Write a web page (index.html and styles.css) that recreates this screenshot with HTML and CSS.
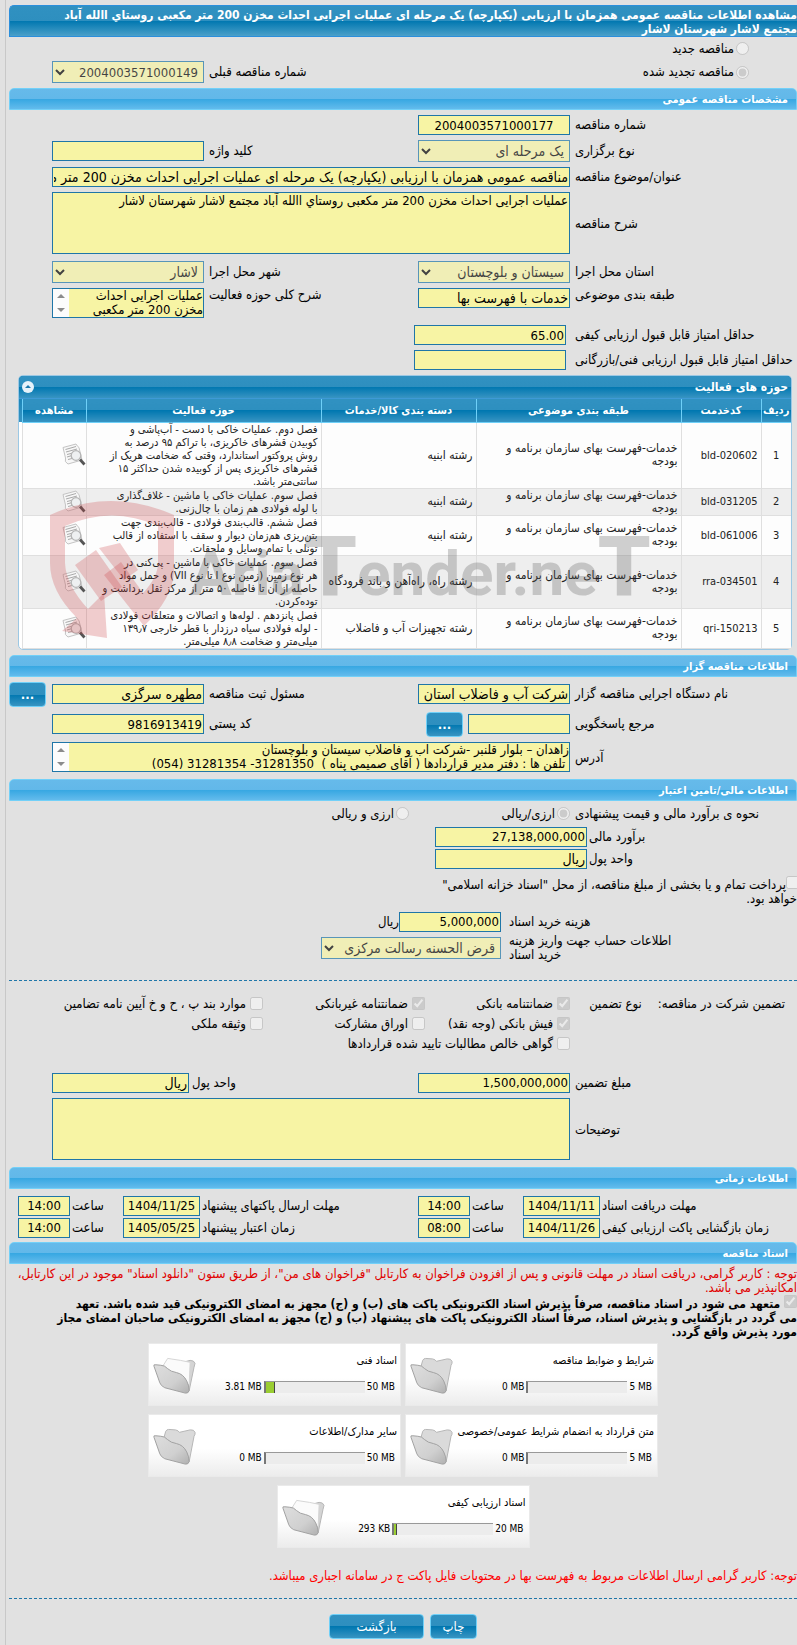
FILE: index.html
```html
<!DOCTYPE html>
<html lang="fa" dir="rtl">
  <head>
    <meta charset="UTF-8" />
    <meta name="viewport" content="width=device-width, initial-scale=1.0" />
    <title>مشاهده اطلاعات مناقصه عمومی</title>
    <link rel="stylesheet" href="styles.css">
  </head>
  <body>
    <svg class="defs" width="0" height="0" aria-hidden="true">
      <defs>
        <linearGradient id="folderFront" x1="0" y1="0" x2="1" y2="1">
          <stop offset="0" stop-color="#dedede" />
          <stop offset="0.6" stop-color="#d0d0d0" />
          <stop offset="1" stop-color="#b0b0b0" />
        </linearGradient>
      </defs>
      <symbol id="folder" viewBox="0 0 44 38">
        <path d="M11 10 L13 3 Q14 1 16 1 L23 1.500 Q26 2 27 4 L38 1.500 Q42 1 43 4 Q43.500 6 42 8 L37 34 L30 34 L12 22 Z" fill="#dadada" stroke="#b5b5b5" />
        <path d="M1 9 Q0 7 3 7.500 L8 8 Q12 8 15 11.500 Q18 14.500 24 15.500 Q31 17 34.500 24 Q37 29 37 34 Q36 37 33 36.500 L12 31 Q8 29 7 26 Z" fill="url(#folderFront)" stroke="#a0a0a0" />
      </symbol>
      <symbol id="folder-full" viewBox="0 0 44 38">
        <path d="M12 10 L38 3 Q42 3 43 6 L42 10 L37 34 L30 34 L12 22 Z" fill="#d4d4d4" stroke="#b5b5b5" />
        <path d="M10 9 L15 1 L28 3 L38 5 L37 28 L12 22 Z" fill="#fbfbfb" stroke="#d5d5d5" />
        <path d="M1 9 Q0 7 3 7.500 L8 8 Q12 8 15 11.500 Q18 14.500 24 15.500 Q31 17 34.500 24 Q37 29 37 34 Q36 37 33 36.500 L12 31 Q8 29 7 26 Z" fill="url(#folderFront)" stroke="#a0a0a0" />
      </symbol>
      <symbol id="view" viewBox="0 0 24 24">
        <path d="M1 4.500 L14 1 Q15 3 17 4.500 L20 17 L6 21 Q2 19 3.500 15 Z" fill="#f7f7f7" stroke="#c4c4c4" />
        <path d="M3.500 6.500 L14 3.500 M4 9 L15 6 M5 11.500 L11 10 M5 14 L10 12.500 M6 16.500 L10 15.500" stroke="#aaa" fill="none" />
        <circle cx="14" cy="12.500" r="4.800" fill="#eef0f1" stroke="#b5b5b5" stroke-width="1.300" />
        <path d="M18 16.500 L22.500 21.500" stroke="#555" stroke-width="2.800" />
      </symbol>
    </svg>

    <main class="page">
      <h1 class="page-title">مشاهده اطلاعات مناقصه عمومی همزمان با ارزیابی (یکپارچه) یک مرحله ای عملیات اجرایی احداث مخزن 200 متر مکعبی روستاي االله آباد<br>مجتمع لاشار شهرستان لاشار</h1>

      <div class="form kind">
        <label class="choice full"><input type="radio" name="kind" disabled />مناقصه جدید</label>
        <label class="choice half"><input type="radio" name="kind" checked disabled />مناقصه تجدید شده</label>
        <label class="label side" for="prevNo">شماره مناقصه قبلی</label>
        <select id="prevNo" class="field number" disabled><option>2004003571000149</option></select>
      </div>

      <h2 class="section">مشخصات مناقصه عمومی</h2>
      <div class="form">
        <label class="label" for="tenderNo">شماره مناقصه</label>
        <div class="cell rest"><input id="tenderNo" class="field number center" value="2004003571000177" readonly /></div>

        <label class="label" for="stage">نوع برگزاری</label>
        <select id="stage" class="field" disabled><option>یک مرحله ای</option></select>
        <label class="label side" for="keyword">کلید واژه</label>
        <input id="keyword" class="field" readonly />

        <label class="label" for="subject">عنوان/موضوع مناقصه</label>
        <input id="subject" class="field wide" value="مناقصه عمومی همزمان با ارزیابی (یکپارچه) یک مرحله ای عملیات اجرایی احداث مخزن 200 متر مکعبی روستاي االله آباد" readonly />

        <label class="label" for="desc">شرح مناقصه</label>
        <textarea id="desc" class="field wide tall" readonly>عملیات اجرایی احداث مخزن 200 متر مکعبی روستاي االله آباد مجتمع لاشار شهرستان لاشار</textarea>

        <label class="label" for="province">استان محل اجرا</label>
        <select id="province" class="field" disabled><option>سیستان و بلوچستان</option></select>
        <label class="label side" for="city">شهر محل اجرا</label>
        <select id="city" class="field" disabled><option>لاشار</option></select>

        <label class="label top" for="category">طبقه بندی موضوعی</label>
        <input id="category" class="field top" value="خدمات با فهرست بها" readonly />
        <label class="label side top" for="scope">شرح کلی حوزه فعالیت</label>
        <div class="scroll-box">
          <textarea id="scope" readonly>عملیات اجرایی احداث
مخزن 200 متر مکعبی</textarea>
          <svg viewBox="0 0 16 28"><path d="M8 5 L12 9 H4 Z M8 23 L4 19 H12 Z" /></svg>
        </div>

        <label class="label" for="scoreQ">حداقل امتیاز قابل قبول ارزیابی کیفی</label>
        <div class="cell rest inset"><input id="scoreQ" class="field number" value="65.00" readonly /></div>
        <label class="label" for="scoreT">حداقل امتیاز قابل قبول ارزیابی فنی/بازرگانی</label>
        <div class="cell rest inset"><input id="scoreT" class="field number" readonly /></div>
      </div>

      <section class="panel">
        <div class="panel-title">
          <span>حوزه های فعالیت</span>
          <button type="button" class="collapse" aria-label="بستن"><svg viewBox="0 0 12 12"><circle cx="6" cy="6" r="6" /><path d="M6 4 L9 7 H3 Z" /></svg></button>
        </div>
        <table class="grid">
          <thead>
            <tr>
              <th class="c-row">ردیف</th>
              <th class="c-code">کدخدمت</th>
              <th class="c-class">طبقه بندی موضوعی</th>
              <th class="c-group">دسته بندی کالا/خدمات</th>
              <th class="c-field">حوزه فعالیت</th>
              <th class="c-view">مشاهده</th>
            </tr>
          </thead>
          <tbody>
            <tr>
              <td class="num">1</td>
              <td class="code">bld-020602</td>
              <td>خدمات-فهرست بهای سازمان برنامه و<br>بودجه</td>
              <td>رشته ابنیه</td>
              <td class="activity">فصل دوم. عملیات خاکی با دست - آب‌پاشی و<br>کوبیدن قشرهای خاکریزی، با تراکم ۹۵ درصد به<br>روش پروکتور استاندارد، وقتی که ضخامت هریک از<br>قشرهای خاکریزی پس از کوبیده شدن حداکثر ۱۵<br>سانتی‌متر باشد.</td>
              <td class="view"><svg><use href="#view" /></svg></td>
            </tr>
            <tr>
              <td class="num">2</td>
              <td class="code">bld-031205</td>
              <td>خدمات-فهرست بهای سازمان برنامه و<br>بودجه</td>
              <td>رشته ابنیه</td>
              <td class="activity">فصل سوم. عملیات خاکی با ماشین - غلاف‌گذاری<br>با لوله فولادی هم زمان با چال‌زنی.</td>
              <td class="view"><svg><use href="#view" /></svg></td>
            </tr>
            <tr>
              <td class="num">3</td>
              <td class="code">bld-061006</td>
              <td>خدمات-فهرست بهای سازمان برنامه و<br>بودجه</td>
              <td>رشته ابنیه</td>
              <td class="activity">فصل ششم. قالب‌بندی فولادی - قالب‌بندی جهت<br>بتن‌ریزی هم‌زمان دیوار و سقف با استفاده از قالب<br>تونلی با تمام وسایل و ملحقات.</td>
              <td class="view"><svg><use href="#view" /></svg></td>
            </tr>
            <tr>
              <td class="num">4</td>
              <td class="code">rra-034501</td>
              <td>خدمات-فهرست بهای سازمان برنامه و<br>بودجه</td>
              <td>رشته راه، راه‌آهن و باند فرودگاه</td>
              <td class="activity">فصل سوم. عملیات خاکی با ماشین - پی‌کنی در<br>هر نوع زمین (زمین نوع I تا نوع VII) و حمل مواد<br>حاصله از آن تا فاصله ۵۰ متر از مرکز ثقل برداشت و<br>توده‌کردن.</td>
              <td class="view"><svg><use href="#view" /></svg></td>
            </tr>
            <tr>
              <td class="num">5</td>
              <td class="code">qri-150213</td>
              <td>خدمات-فهرست بهای سازمان برنامه و<br>بودجه</td>
              <td>رشته تجهیزات آب و فاضلاب</td>
              <td class="activity">فصل پانزدهم . لوله‌ها و اتصالات و متعلقات فولادی<br>- لوله فولادی سیاه درزدار با قطر خارجی ۱۳۹٫۷<br>میلی‌متر و ضخامت ۸٫۸ میلی‌متر.</td>
              <td class="view"><svg><use href="#view" /></svg></td>
            </tr>
          </tbody>
        </table>
        <div class="watermark" dir="ltr">
          <svg viewBox="0 0 124 138">
            <path d="M0 14 Q60 -14 124 14 V72 Q122 98 94 125 L54 74 L71 61 L93 92 Q108 76 108 62 V25 Q62 4 15 25 V62 Q16 84 38 108 L54 92 L57 137 L12 130 L27 117 Q0 90 0 62 Z" />
            <path d="M25 64 L46 49 L72 86 L51 100 Z M49 47 L70 42 L88 69 L74 79 Z" />
          </svg>
          <span>Aria<b>T</b>ender.ne<b>T</b></span>
        </div>
      </section>

      <h2 class="section">اطلاعات مناقصه گزار</h2>
      <div class="form">
        <label class="label" for="org">نام دستگاه اجرایی مناقصه گزار</label>
        <input id="org" class="field" value="شرکت آب و فاضلاب استان" readonly />
        <label class="label side" for="owner">مسئول ثبت مناقصه</label>
        <input id="owner" class="field" value="مطهره سرگزی" readonly />
        <button type="button" class="btn more">...</button>

        <label class="label" for="contact">مرجع پاسخگویی</label>
        <div class="cell contact">
          <input id="contact" class="field" readonly />
          <button type="button" class="btn more">...</button>
        </div>
        <label class="label side" for="postal">کد پستی</label>
        <input id="postal" class="field number" value="9816913419" readonly />

        <label class="label" for="address">آدرس</label>
        <div class="scroll-box wide">
          <textarea id="address" readonly>زاهدان – بلوار قلنبر -شرکت آب و فاضلاب سیستان و بلوچستان
 تلفن ها : دفتر مدیر قراردادها ( آقای صمیمی پناه )  31281350- 31281354 (054)</textarea>
          <svg viewBox="0 0 16 28"><path d="M8 5 L12 9 H4 Z M8 23 L4 19 H12 Z" /></svg>
        </div>
      </div>

      <h2 class="section">اطلاعات مالی/تامین اعتبار</h2>
      <div class="currency-kind">
        <span class="label">نحوه ی برآورد مالی و قیمت پیشنهادی</span>
        <label class="choice"><input type="radio" name="currency" checked disabled />ارزی/ریالی</label>
        <label class="choice"><input type="radio" name="currency" disabled />ارزی و ریالی</label>
      </div>
      <div class="estimate">
        <label class="label" for="estimate">برآورد مالی</label>
        <input id="estimate" class="field number" value="27,138,000,000" readonly />
        <label class="label" for="unit">واحد پول</label>
        <input id="unit" class="field" value="ریال" readonly />
      </div>
      <label class="treasury"><input type="checkbox" disabled />پرداخت تمام و یا بخشی از مبلغ مناقصه، از محل "اسناد خزانه اسلامی" خواهد بود.</label>
      <div class="cost">
        <label class="label" for="cost">هزینه خرید اسناد</label>
        <div class="cell"><input id="cost" class="field number" value="5,000,000" readonly />ریال</div>
        <label class="label" for="account">اطلاعات حساب جهت واریز هزینه<br>خرید اسناد</label>
        <select id="account" class="field" disabled><option>قرض الحسنه رسالت مرکزی</option></select>
      </div>
      <hr>

      <div class="guarantee">
        <div class="guarantee-title"><span>تضمین شرکت در مناقصه:</span><span>نوع تضمین</span></div>
        <label class="choice"><input type="checkbox" checked disabled />ضمانتنامه بانکی</label>
        <label class="choice"><input type="checkbox" checked disabled />ضمانتنامه غیربانکی</label>
        <label class="choice"><input type="checkbox" disabled />موارد بند پ ، ح و خ آیین نامه تضامین</label>
        <label class="choice second"><input type="checkbox" checked disabled />فیش بانکی (وجه نقد)</label>
        <label class="choice"><input type="checkbox" disabled />اوراق مشارکت</label>
        <label class="choice"><input type="checkbox" disabled />وثیقه ملکی</label>
        <label class="choice second long"><input type="checkbox" disabled />گواهی خالص مطالبات تایید شده قراردادها</label>
      </div>
      <div class="form amounts">
        <label class="label" for="amount">مبلغ تضمین</label>
        <input id="amount" class="field number" value="1,500,000,000" readonly />
        <div class="unit-pair">
          <label for="unit2">واحد پول</label>
          <input id="unit2" class="field" value="ریال" readonly />
        </div>
        <label class="label" for="notes">توضیحات</label>
        <textarea id="notes" class="field wide tall" readonly></textarea>
      </div>

      <h2 class="section">اطلاعات زمانی</h2>
      <div class="times">
        <label class="label" for="d1">مهلت دریافت اسناد</label>
        <input id="d1" class="field number center" value="1404/11/11" readonly />
        <label class="label" for="t1">ساعت</label>
        <input id="t1" class="field number center" value="14:00" readonly />
        <label class="label" for="d2">مهلت ارسال پاکتهای پیشنهاد</label>
        <input id="d2" class="field number center" value="1404/11/25" readonly />
        <label class="label" for="t2">ساعت</label>
        <input id="t2" class="field number center" value="14:00" readonly />
        <label class="label" for="d3">زمان بازگشایی پاکت ارزیابی کیفی</label>
        <input id="d3" class="field number center" value="1404/11/26" readonly />
        <label class="label" for="t3">ساعت</label>
        <input id="t3" class="field number center" value="08:00" readonly />
        <label class="label" for="d4">زمان اعتبار پیشنهاد</label>
        <input id="d4" class="field number center" value="1405/05/25" readonly />
        <label class="label" for="t4">ساعت</label>
        <input id="t4" class="field number center" value="14:00" readonly />
      </div>

      <h2 class="section">اسناد مناقصه</h2>
      <p class="notice">توجه : کاربر گرامی، دریافت اسناد در مهلت قانونی و پس از افزودن فراخوان به کارتابل "فراخوان های من"، از طریق ستون "دانلود اسناد" موجود در این کارتابل،<br>امکانپذیر می باشد.</p>
      <label class="commit"><input type="checkbox" checked disabled /> متعهد می شود در اسناد مناقصه، صرفاً پذیرش اسناد الکترونیکی پاکت های (ب) و (ج) مجهز به امضای الکترونیکی قید شده باشد. تعهد<br>می گردد در بازگشایی و پذیرش اسناد، صرفاً اسناد الکترونیکی پاکت های پیشنهاد (ب) و (ج) مجهز به امضای الکترونیکی صاحبان امضای مجاز<br>مورد پذیرش واقع گردد.</label>

      <div class="docs">
        <div class="doc">
          <div class="doc-info">
            <div class="doc-name">شرایط و ضوابط مناقصه</div>
            <div class="quota"><span dir="ltr">5 MB</span><div class="bar"></div><span dir="ltr">0 MB</span></div>
          </div>
          <svg><use href="#folder" /></svg>
        </div>
        <div class="doc">
          <div class="doc-info">
            <div class="doc-name">اسناد فنی</div>
            <div class="quota"><span dir="ltr">50 MB</span><div class="bar"><i style="width: 9%"></i></div><span dir="ltr">3.81 MB</span></div>
          </div>
          <svg><use href="#folder-full" /></svg>
        </div>
        <div class="doc">
          <div class="doc-info">
            <div class="doc-name">متن قرارداد به انضمام شرایط عمومی/خصوصی</div>
            <div class="quota"><span dir="ltr">5 MB</span><div class="bar"></div><span dir="ltr">0 MB</span></div>
          </div>
          <svg><use href="#folder" /></svg>
        </div>
        <div class="doc">
          <div class="doc-info">
            <div class="doc-name">سایر مدارک/اطلاعات</div>
            <div class="quota"><span dir="ltr">50 MB</span><div class="bar"></div><span dir="ltr">0 MB</span></div>
          </div>
          <svg><use href="#folder" /></svg>
        </div>
        <div class="doc">
          <div class="doc-info">
            <div class="doc-name">اسناد ارزیابی کیفی</div>
            <div class="quota"><span dir="ltr">20 MB</span><div class="bar"><i style="width: 3%"></i></div><span dir="ltr">293 KB</span></div>
          </div>
          <svg><use href="#folder-full" /></svg>
        </div>
      </div>
      <p class="warning">توجه: کاربر گرامی ارسال اطلاعات مربوط به فهرست بها در محتویات فایل پاکت ج در سامانه اجباری میباشد.</p>
      <hr>
      <div class="actions">
        <button type="button" class="btn print">چاپ</button>
        <button type="button" class="btn back">بازگشت</button>
      </div>
    </main>
  </body>
</html>
```
FILE: styles.css
```css
* {
  box-sizing: border-box;
}

body {
  margin: 0;
  background: #e1e1e1;
  color: #000;
  font-family: Tahoma, "DejaVu Sans Condensed", "DejaVu Sans", sans-serif;
  font-size: 13px;
  line-height: 14px;
  overflow-x: hidden;
}

.defs {
  position: absolute;
}

.page {
  margin-left: 5px;
  padding: 5px 0 6px 3px;
  border-left: 1px solid #c8c8c8;
}

/* Title bars */
.page-title {
  margin: 0;
  padding: 2px 0;
  height: 32px;
  font-size: 12px;
  line-height: 14px;
  color: #fff;
  border: 1px solid #2b8fdc;
  border-right: 0;
  border-radius: 5px 0 0 0;
  background: linear-gradient(#3091c1 0, #2e8fbf 50%, #0077b0 50%, #4ba0c9 100%);
}

.section {
  margin: 0;
  padding: 0 8px;
  height: 22px;
  font-size: 11px;
  line-height: 21px;
  color: #fff;
  border: 1px solid #72d0f8;
  border-radius: 5px 5px 0 0;
  background: linear-gradient(#66baea 0, #62b8e9 50%, #36a7e2 50%, #63bbec 100%);
}

/* Form rows */
.form {
  display: grid;
  grid-template-columns: 227fr 152px 214fr 152px 43px;
  gap: 5px 0;
  align-items: center;
  padding: 5px 0;
}

.label {
  padding-left: 5px;
  text-align: left;
  white-space: nowrap;
}

.form > .label {
  grid-column: 1;
}

.form > .side {
  grid-column: 3;
}

.field,
.scroll-box {
  width: 152px;
  border: 1px solid #1f76a8;
  background: #f7f4a4;
}

.field {
  height: 20px;
  margin: 0;
  padding: 0 1px;
  border-radius: 0;
  color: #000;
  font-family: inherit;
  font-size: 14px;
  outline: none;
}

.number {
  font-size: 13px;
}

select.field {
  height: 22px;
  padding: 0 1px;
  opacity: 0.7;
}

.center {
  text-align: center;
}

.wide {
  grid-column: 2 / 5;
  width: 100%;
}

.rest {
  grid-column: 2 / 6;
}

.cell {
  display: flex;
  align-items: center;
}

.inset {
  padding-right: 4px;
}

.top {
  align-self: start;
}

textarea {
  display: block;
  resize: none;
}

textarea.tall {
  height: 62px;
  margin-bottom: 2px;
  font-size: 13px;
  line-height: 16px;
}

.scroll-box {
  display: flex;
  height: 30px;
  margin-bottom: 2px;
}

.scroll-box.wide {
  width: 100%;
}

.scroll-box textarea {
  flex: 1;
  min-width: 0;
  height: 28px;
  padding: 0;
  border: 0;
  background: none;
  font-family: inherit;
  font-size: 13px;
  line-height: 14px;
  overflow: hidden;
  outline: none;
}

.scroll-box svg {
  width: 16px;
  height: 28px;
  background: #fcfcfc;
  fill: #8b8b8b;
}

.choice {
  display: flex;
  align-items: center;
  gap: 2px;
  white-space: nowrap;
}

.choice input,
.treasury input,
.commit input {
  width: 13px;
  height: 13px;
  margin: 0;
}

.kind {
  gap: 1px 0;
  padding: 0 0 5px;
}

.kind .choice {
  padding-right: 48px;
}

.full {
  grid-column: 1 / 6;
  height: 23px;
}

.half {
  grid-column: 1 / 3;
}

/* Activities table */
.panel {
  position: relative;
  margin: 0 5px 5px 9px;
  border: 1px solid #9cc8e4;
  border-radius: 5px;
  background: linear-gradient(#0077b0, #3894c2) top / 100% 46px no-repeat #fff;
}

.panel-title {
  display: flex;
  justify-content: space-between;
  align-items: center;
  height: 23px;
  padding: 0 3px;
  color: #fff;
  font-size: 12px;
  font-weight: bold;
  border-bottom: 1px solid #3e9ad6;
  border-radius: 4px 4px 0 0;
  background: linear-gradient(#3091c1 0, #2e8fbf 50%, #0077b0 50%, #3894c2 100%);
}

.collapse {
  width: 12px;
  height: 12px;
  padding: 0;
  border: 0;
  background: none;
}

.collapse svg {
  display: block;
  width: 12px;
  height: 12px;
  fill: #e6f2fa;
}

.collapse path {
  fill: #1a77ab;
}

.grid {
  width: calc(100% - 3px);
  table-layout: fixed;
  border-collapse: collapse;
  font-size: 12px;
  line-height: 13px;
  color: #222;
}

.c-row { width: 30px; }
.c-code { width: 80px; }
.c-class { width: 205px; }
.c-group { width: 155px; }
.c-field { width: 235px; }

.grid th {
  height: 23px;
  padding: 0;
  color: #fff;
  font-size: 11px;
  border-left: 1px solid #6fd0f8;
  border-bottom: 1px solid #6fd0f8;
  background: linear-gradient(#3091c1 0, #2e8fbf 50%, #0077b0 50%, #3894c2 100%);
}

.grid td {
  padding: 0 3px;
  border-left: 1px solid #dfdfdf;
  border-bottom: 1px solid #dfdfdf;
  background: #fdfdfd;
  white-space: nowrap;
}

.grid tr:nth-child(even) td {
  background: #eee;
}

.grid .num {
  text-align: center;
}

.grid .num,
.grid .code,
.grid .activity {
  font-size: 11px;
}

.grid .view {
  padding: 0 0 0 2px;
  text-align: right;
}

.view svg {
  display: block;
  width: 24px;
  height: 24px;
}

/* Watermark laid over the table */
.watermark {
  position: absolute;
  left: 31px;
  top: 125px;
  display: flex;
  align-items: center;
  gap: 16px;
  pointer-events: none;
}

.watermark svg {
  width: 124px;
  height: 138px;
  fill: rgba(205, 60, 65, 0.25);
}

.watermark span {
  color: rgba(90, 90, 90, 0.28);
  font-family: Roboto, "Liberation Sans", sans-serif;
  font-size: 62px;
  font-weight: bold;
  line-height: 80px;
}

.watermark b {
  font-size: 84px;
}

/* Buttons */
.btn {
  height: 25px;
  padding: 0;
  color: #fff;
  font-family: inherit;
  font-size: 13px;
  border: 1px solid #6fd0f8;
  border-radius: 4px;
  background: linear-gradient(#3091c1 0, #2e8fbf 50%, #0077b0 50%, #3894c2 100%);
}

.more {
  width: 37px;
  font-weight: bold;
  justify-self: end;
}

.contact {
  gap: 5px;
}

.contact .field {
  width: 102px;
}

.contact .btn {
  flex: none;
}

/* Finance */
.currency-kind {
  display: grid;
  grid-template-columns: 227fr 161fr 400fr;
  align-items: center;
  height: 26px;
}

.estimate {
  display: grid;
  grid-template-columns: 210fr 578fr;
  gap: 2px 0;
  align-items: center;
}

.estimate .label {
  padding-left: 2px;
}

.treasury {
  display: block;
  max-width: 375px;
  margin: 7px 0 6px;
}

.treasury input {
  margin-right: -2px;
  vertical-align: 0;
}

.cost {
  display: grid;
  grid-template-columns: 296fr 492fr;
  gap: 2px 0;
  align-items: center;
}

.cost .label {
  justify-self: end;
  padding-left: 8px;
}

#cost {
  width: 102px;
}

#account {
  width: 180px;
}

hr {
  height: 0;
  margin: 18px 0 13px;
  border: 0;
  border-top: 1px dashed #1f76a8;
}

.guarantee {
  display: grid;
  grid-template-columns: 227fr 145fr 162fr 254fr;
  grid-auto-rows: 20px;
  align-items: center;
}

.guarantee .choice {
  gap: 4px;
}

.guarantee-title {
  display: flex;
  gap: 16px;
  padding-right: 12px;
  white-space: nowrap;
}

.second {
  grid-column-start: 2;
}

.long {
  grid-column-end: 4;
}

.amounts {
  padding: 19px 0 5px;
}

.unit-pair {
  grid-column: 3 / 5;
  display: flex;
  align-items: center;
  justify-content: flex-end;
  gap: 3px;
}

.unit-pair .field {
  width: 137px;
}

/* Deadlines */
.times {
  display: grid;
  grid-template-columns: 197fr 77px 53px 52px 218fr 77px 53px 52px;
  gap: 2px 0;
  align-items: center;
  padding: 7px 0 4px 9px;
}

.times .field {
  width: 100%;
}

.times .label {
  padding-left: 2px;
}

/* Documents */
.notice,
.warning {
  margin: 3px 0 0;
  color: #e00000;
}

.commit {
  display: block;
  margin-bottom: 4px;
  font-size: 12px;
  font-weight: bold;
}

.docs {
  display: flex;
  flex-wrap: wrap;
  justify-content: center;
  gap: 8px 4px;
  max-width: 510px;
  margin: 0 auto;
}

.doc {
  display: flex;
  width: 253px;
  height: 63px;
  padding: 10px 3px 0 4px;
  border: 1px solid #eaeaea;
  background: linear-gradient(#fff 55%, #ececec);
  font-size: 11px;
}

.doc > svg {
  width: 43px;
  height: 38px;
  margin-top: 3px;
}

.doc-info {
  flex: 1;
  white-space: nowrap;
}

.quota {
  display: flex;
  align-items: center;
  gap: 2px;
  height: 14px;
  padding-right: 2px;
  margin-top: 12px;
  font-size: 10px;
}

.bar {
  width: 101px;
  height: 12px;
  direction: ltr;
  border-top: 1px solid #999;
  border-left: 2px solid #777;
  background: #ececec;
}

.bar i {
  display: block;
  height: 100%;
  background: #9acd32;
  border-right: 1px solid #444;
}

.warning {
  margin-top: 21px;
  color: #f00;
}

.warning + hr {
  margin: 15px 0;
}

.actions {
  display: flex;
  justify-content: center;
  gap: 6px;
}

.print {
  width: 47px;
}

.back {
  width: 95px;
}
```
